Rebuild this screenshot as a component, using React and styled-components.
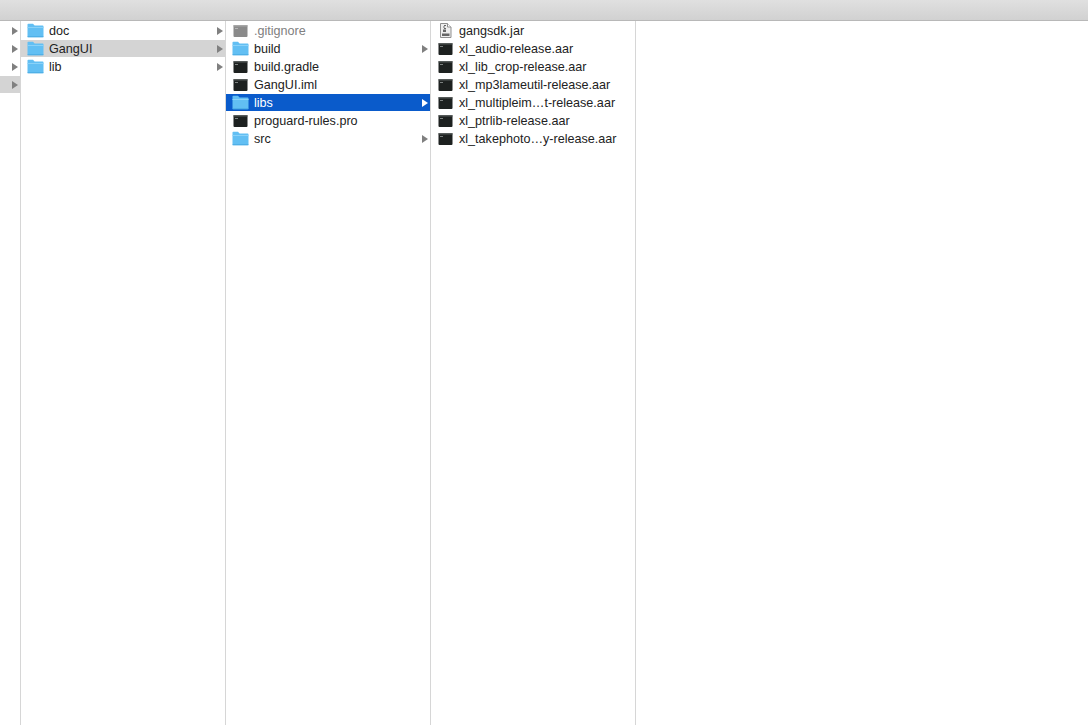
import React from "react";
import styled, { createGlobalStyle } from "styled-components";

const Global = createGlobalStyle`
  html, body { margin: 0; padding: 0; background: #fff; }
  body { font-family: "Liberation Sans", Arial, sans-serif; overflow: hidden; }
`;

const Window = styled.div`
  width: 1088px;
  height: 725px;
  display: flex;
  flex-direction: column;
  background: #fff;
  overflow: hidden;
`;

const TitleBar = styled.div`
  height: 20px;
  flex: none;
  background: linear-gradient(#e0e0e0, #d1d1d1);
  border-bottom: 1px solid #b8b8b8;
`;

const Browser = styled.div`
  flex: 1;
  display: flex;
  min-height: 0;
`;

const Column = styled.div`
  width: ${(p) => p.$width}px;
  flex: none;
  box-sizing: border-box;
  padding-top: 1px;
  display: flex;
  flex-direction: column;
  gap: 1px;
  border-right: 1px solid #d6d6d6;
`;

const Row = styled.div`
  height: 17px;
  flex: none;
  display: flex;
  align-items: center;
  padding-left: ${(p) => p.$indent}px;
  background: ${(p) => (p.$state === "active" ? "#0a5bcb" : p.$state === "inactive" ? "#d4d4d4" : "transparent")};
`;

const Name = styled.span`
  flex: 1;
  margin: 2px 0 0 5px;
  font-size: 12.6px;
  line-height: 17px;
  white-space: nowrap;
  color: ${(p) => (p.$state === "active" ? "#fff" : p.$dim ? "#808080" : "#222")};
`;

const Arrow = styled.svg`
  width: 6px;
  height: 8px;
  flex: none;
  margin-right: 2px;
  fill: ${(p) => (p.$state === "active" ? "#fff" : "#808080")};
`;

const IconBox = styled.svg`
  width: 17px;
  height: 15px;
  flex: none;
  display: block;
`;

const Disclosure = ({ state }) => (
  <Arrow viewBox="0 0 6 8" $state={state}>
    <path d="M0 0 L6 4 L0 8 Z" />
  </Arrow>
);

const FolderIcon = () => (
  <IconBox viewBox="0 0 17 15">
    <path d="M0.5 1.6 Q0.5 0.8 1.3 0.8 H6 L7.6 2.4 H15.6 Q16.5 2.4 16.5 3.3 V13.4 Q16.5 14.2 15.6 14.2 H1.3 Q0.5 14.2 0.5 13.4 Z" fill="#62bff3" />
    <path d="M0.5 4 H16.5 V5 H0.5 Z" fill="#8ad2f8" />
    <path d="M0.5 13.4 H16.5 V14.2 H0.5 Z" fill="#43a6df" />
  </IconBox>
);

const ExecIcon = ({ dim }) => (
  <IconBox viewBox="0 0 17 15">
    <rect x="1.5" y="2" width="14" height="12" rx="1" fill={dim ? "#8a8a8a" : "#1d2120"} />
    <rect x="1.5" y="2" width="14" height="1.5" fill={dim ? "#a6a6a6" : "#555a59"} />
    <rect x="3" y="5" width="3" height="1" fill={dim ? "#b5b5b5" : "#7d8281"} />
  </IconBox>
);

const JarIcon = () => (
  <IconBox viewBox="0 0 17 15">
    <path d="M3.5 0.5 H10.5 L14 4 V14.5 H3.5 Z" fill="#eeeeee" stroke="#8f8f8f" />
    <path d="M10.5 0.5 V4 H14" fill="#fff" stroke="#8f8f8f" />
    <path d="M7 2 H9 V3 H7 Z M6 3.5 H8 V4.5 H6 Z M7 5 H9 V6 H7 Z M6 6.5 H9 V9 H6 Z" fill="#666" />
    <rect x="5" y="10.5" width="7.5" height="2.5" fill="#666" />
  </IconBox>
);

const icons = {
  folder: <FolderIcon />,
  exec: <ExecIcon />,
  dim: <ExecIcon dim />,
  jar: <JarIcon />,
};

const col1 = [
  { name: "doc", icon: "folder", arrow: true },
  { name: "GangUI", icon: "folder", arrow: true, state: "inactive" },
  { name: "lib", icon: "folder", arrow: true },
];

const col2 = [
  { name: ".gitignore", icon: "dim", dim: true },
  { name: "build", icon: "folder", arrow: true },
  { name: "build.gradle", icon: "exec" },
  { name: "GangUI.iml", icon: "exec" },
  { name: "libs", icon: "folder", arrow: true, state: "active" },
  { name: "proguard-rules.pro", icon: "exec" },
  { name: "src", icon: "folder", arrow: true },
];

const col3 = [
  { name: "gangsdk.jar", icon: "jar" },
  { name: "xl_audio-release.aar", icon: "exec" },
  { name: "xl_lib_crop-release.aar", icon: "exec" },
  { name: "xl_mp3lameutil-release.aar", icon: "exec" },
  { name: "xl_multipleim…t-release.aar", icon: "exec" },
  { name: "xl_ptrlib-release.aar", icon: "exec" },
  { name: "xl_takephoto…y-release.aar", icon: "exec" },
];

const EdgeRow = styled(Row)`
  justify-content: flex-end;
`;

const FileColumn = ({ items, indent }) => (
  <Column $width={205}>
    {items.map((it) => (
      <Row key={it.name} $indent={indent} $state={it.state}>
        {icons[it.icon]}
        <Name $state={it.state} $dim={it.dim}>{it.name}</Name>
        {it.arrow && <Disclosure state={it.state} />}
      </Row>
    ))}
  </Column>
);

export default function App() {
  return (
    <Window>
      <Global />
      <TitleBar />
      <Browser>
        <Column $width={21}>
          {["a", "b", "c", "d"].map((k) => (
            <EdgeRow key={k} $indent={0} $state={k === "d" ? "inactive" : undefined}>
              <Disclosure />
            </EdgeRow>
          ))}
        </Column>
        <FileColumn items={col1} indent={6} />
        <FileColumn items={col2} indent={6} />
        <FileColumn items={col3} indent={6} />
      </Browser>
    </Window>
  );
}
